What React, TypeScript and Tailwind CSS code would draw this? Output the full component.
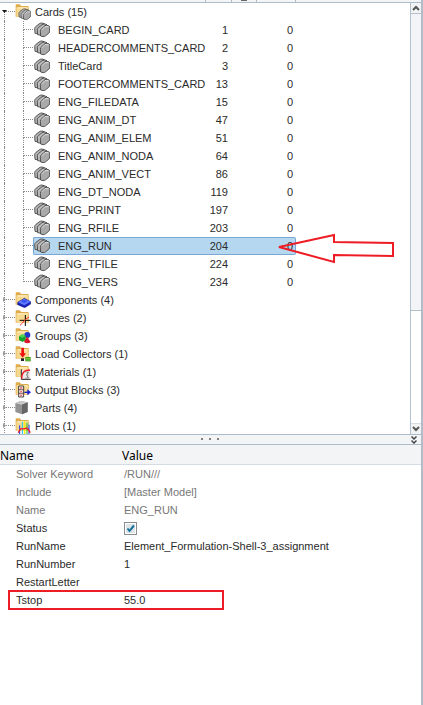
import type { ReactNode } from 'react';

const cards = [
  { name: 'BEGIN_CARD', id: 1 },
  { name: 'HEADERCOMMENTS_CARD', id: 2 },
  { name: 'TitleCard', id: 3 },
  { name: 'FOOTERCOMMENTS_CARD', id: 13 },
  { name: 'ENG_FILEDATA', id: 15 },
  { name: 'ENG_ANIM_DT', id: 47 },
  { name: 'ENG_ANIM_ELEM', id: 51 },
  { name: 'ENG_ANIM_NODA', id: 64 },
  { name: 'ENG_ANIM_VECT', id: 86 },
  { name: 'ENG_DT_NODA', id: 119 },
  { name: 'ENG_PRINT', id: 197 },
  { name: 'ENG_RFILE', id: 203 },
  { name: 'ENG_RUN', id: 204 },
  { name: 'ENG_TFILE', id: 224 },
  { name: 'ENG_VERS', id: 234 },
];

const selected = 'ENG_RUN';

const CardShape = () => (
  <>
    <path d="M3 34 L2 20 Q2 16 6 13 L15 6 Q18 3 24 3 L31 5 L16 18 L14 36 Z" fill="#b4b4b4" stroke="#3f3f3f" strokeWidth="2.5" />
    <path d="M11 38 L10 23 Q10 19 14 16 L23 9 Q26 6 32 6 L39 8 L24 21 L22 40 Z" fill="#bdbdbd" stroke="#3f3f3f" strokeWidth="2.5" />
    <path d="M20 42 L19 28 Q19 24 22 21 L30 13 Q33 10 37 10 L44 11 Q47 12 47 16 L47 30 L44 34 L34 42 Q31 44 27 44 Z" fill="#a9a9a9" stroke="#3f3f3f" strokeWidth="2.5" />
    <path d="M23 24 L33 14 L43 14" fill="none" stroke="#dedede" strokeWidth="3" />
  </>
);

const Folder = ({ children }: { children?: ReactNode }) => (
  <svg viewBox="0 0 48 48" className="size-4 shrink-0" aria-hidden="true">
    <path d="M2 38 V3 Q2 1 4 1 H14 L19 6 H38 Q41 6 41 9 V38 Z" fill="#dfab4c" />
    <path d="M4 12 Q4 9 8 9 H39 V38 H4 Z" fill="#f7d98f" />
    <path d="M8 12 H36" stroke="#fdf0c8" strokeWidth="3" />
    {children}
  </svg>
);

const CardIcon = () => (
  <svg viewBox="0 0 48 48" className="size-4 shrink-0" aria-hidden="true">
    <CardShape />
  </svg>
);

const CardsIcon = () => (
  <Folder>
    <g transform="translate(10 12) scale(0.8)">
      <CardShape />
    </g>
  </Folder>
);

const ComponentsIcon = () => (
  <Folder>
    <path d="M8 31 L28 19 L47 29 V36 L29 47 L8 38 Z" fill="#1722b8" stroke="#0c1280" strokeWidth="1.5" />
    <path d="M9 31 L28 20 L46 29 L28 40 Z" fill="#5f7bff" />
    <ellipse cx="28" cy="28" rx="8" ry="4" fill="#3a50ee" />
  </Folder>
);

const CurvesIcon = () => (
  <Folder>
    <path d="M14 31 H47 M31 15 V48" stroke="#000" strokeWidth="3" />
    <path d="M15 46 Q22 40 27 33 T42 21" fill="none" stroke="#f0282d" strokeWidth="3" />
  </Folder>
);

const GroupsIcon = () => (
  <Folder>
    <circle cx="37" cy="21" r="9" fill="#2336c8" />
    <path d="M12 25 L23 19 L32 24 V37 L22 42 L12 36 Z" fill="#16a32c" />
    <path d="M12 25 L23 19 L32 24 L22 29 Z" fill="#4bd75c" />
    <path d="M36 26 L47 42 Q37 50 27 42 Z" fill="#d8172c" />
  </Folder>
);

const LoadCollectorsIcon = () => (
  <Folder>
    <path d="M19 5 H27 V22 H33 L23 35 L13 22 H19 Z" fill="#ee1111" />
    <path d="M18 37 H27 V45 H18 Z" fill="#222" />
    <path d="M31 33 H47 V46 H31 Z" fill="#3b9412" />
    <path d="M33 37 H45 M33 42 H45" stroke="#a5f05f" strokeWidth="2" />
  </Folder>
);

const MaterialsIcon = () => (
  <Folder>
    <path d="M19 18 H46 V46 H19 Z" fill="#eee8e8" />
    <path d="M19 16 V46 H47" fill="none" stroke="#222" strokeWidth="3" />
    <path d="M20 44 C21 24 27 19 45 18" fill="none" stroke="#ef1c23" strokeWidth="4" />
    <path d="M31 24 H41 L34 33 L41 42 H31 M38 24 V42" fill="none" stroke="#777" strokeWidth="2" />
  </Folder>
);

const OutputBlocksIcon = () => (
  <Folder>
    <path d="M11 12 H26 V45 H11 Z" fill="#fff" stroke="#222" strokeWidth="2.5" />
    <path d="M11 23 H26 M11 34 H26" stroke="#222" strokeWidth="2" />
    <path d="M14 15 L23 21 M23 15 L14 21 M14 26 L23 32 M23 26 L14 32 M14 37 L23 43 M23 37 L14 43" stroke="#e0393e" strokeWidth="2" />
    <path d="M28 31 H40" stroke="#1a22d0" strokeWidth="4" />
    <path d="M37 22 L48 31 L37 40 Z" fill="#1a22d0" />
  </Folder>
);

const PartsIcon = () => (
  <svg viewBox="0 0 48 48" className="size-4 shrink-0" aria-hidden="true">
    <path d="M1 10 L16 3 L38 7 V36 L21 43 L1 36 Z" fill="#929292" />
    <path d="M1 10 L16 3 L38 7 L21 14 Z" fill="#c9c9c9" />
    <path d="M21 14 L38 7 V36 L21 43 Z" fill="#666" />
  </svg>
);

const PlotsIcon = () => (
  <Folder>
    <path d="M14 22 V48" stroke="#1d32e8" strokeWidth="3" />
    <path d="M22 12 V48" stroke="#19c2e8" strokeWidth="3" />
    <path d="M29 10 V48" stroke="#f4ee1c" strokeWidth="5" />
    <path d="M36 14 V48" stroke="#22b52e" strokeWidth="3" />
    <path d="M42 20 V48" stroke="#1d32e8" strokeWidth="3" />
    <path d="M10 44 Q16 30 22 32 T34 30 Q40 32 46 44" fill="none" stroke="#ef1c23" strokeWidth="4" />
  </Folder>
);

const folders = [
  { name: 'Components (4)', icon: <ComponentsIcon /> },
  { name: 'Curves (2)', icon: <CurvesIcon /> },
  { name: 'Groups (3)', icon: <GroupsIcon /> },
  { name: 'Load Collectors (1)', icon: <LoadCollectorsIcon /> },
  { name: 'Materials (1)', icon: <MaterialsIcon /> },
  { name: 'Output Blocks (3)', icon: <OutputBlocksIcon /> },
  { name: 'Parts (4)', icon: <PartsIcon /> },
  { name: 'Plots (1)', icon: <PlotsIcon /> },
];

const FolderRow = ({ name, icon, open }: { name: string; icon: ReactNode; open?: boolean }) => (
  <tr className="h-[18px]">
    <td colSpan={5} className="p-0">
      <div className="relative flex h-[18px] items-center pl-1">
        <div className="w-[11px] shrink-0">
          <div className={`h-[9px] border-b border-dotted border-[#8a8a8a] ${open ? '' : 'border-l'}`} />
          <div className="h-[9px] border-l border-dotted border-[#8a8a8a]" />
        </div>
        <button
          type="button"
          aria-label={`Toggle ${name}`}
          aria-expanded={!!open}
          className="absolute left-[2px] top-[6px] h-[5px] w-[6px]"
        >
          <svg viewBox="0 0 6 5" className="block h-[5px] w-[6px]">
            {open ? <path d="M0 1 H5 L2.5 4 Z" fill="#111" /> : <path d="M1 0 L4 2.5 L1 5 Z" fill="#999" />}
          </svg>
        </button>
        {icon}
        <span className="pl-1">{name}</span>
      </div>
    </td>
  </tr>
);

const CardRow = ({ name, id, last }: { name: string; id: number; last: boolean }) => {
  const active = name === selected;
  const cell = active ? 'border-y border-[#7ba7d4] bg-[#b5d8f0] leading-4' : '';
  return (
    <tr className="h-[18px]" aria-selected={active}>
      <td className="p-0">
        <div className="flex h-[18px] pl-1">
          <div className="w-[19px] shrink-0 border-l border-dotted border-[#8a8a8a]" />
          <div className="w-[10px] shrink-0">
            <div className="h-[9px] border-b border-l border-dotted border-[#8a8a8a]" />
            <div className={`h-[9px] border-dotted border-[#8a8a8a] ${last ? '' : 'border-l'}`} />
          </div>
          <div className={`flex min-w-0 flex-1 items-center gap-2 ${active ? 'rounded-l-xs border-l' : 'pl-px'} ${cell}`}>
            <CardIcon />
            <span>{name}</span>
          </div>
        </div>
      </td>
      <td className={`p-0 pr-[3px] text-right ${cell}`}>{id}</td>
      <td className={`p-0 ${cell}`} />
      <td className={`p-0 text-right ${active ? 'rounded-r-xs border-r pr-[2px]' : 'pr-[3px]'} ${cell}`}>0</td>
      <td className="p-0" />
    </tr>
  );
};

const ScrollBar = () => (
  <div className="flex w-[11px] shrink-0 flex-col border-l border-[#b4c1cc] bg-white">
    <button type="button" aria-label="Scroll up" className="flex h-[11px] items-center justify-center border-b border-[#b4c1cc] bg-[#f1f3f5]">
      <svg viewBox="0 0 8 6" className="h-[6px] w-2">
        <path d="M1 5 L4 2 L7 5" fill="none" stroke="#555" strokeWidth="2" />
      </svg>
    </button>
    <div className="h-[69%] border-b border-[#b4c1cc] bg-[#f3f4f7]" />
    <div className="flex-1" />
    <button type="button" aria-label="Scroll down" className="flex h-[11px] items-center justify-center border-t border-[#d5dbe3] bg-[#f1f3f5]">
      <svg viewBox="0 0 8 6" className="h-[6px] w-2">
        <path d="M1 1 L4 4 L7 1" fill="none" stroke="#555" strokeWidth="2" />
      </svg>
    </button>
  </div>
);

const Arrow = () => (
  <svg viewBox="0 0 118 32" className="pointer-events-none absolute left-[277px] top-[230px] h-8 w-[118px]" aria-hidden="true">
    <path d="M2 14 L57 2 V9 L116 10 V23 L57 22 V29 Z" fill="none" stroke="#ee1c24" strokeWidth="2" />
  </svg>
);

const Tree = () => (
  <section className="relative flex min-h-0 flex-[431_1_0%]">
    <div className="min-w-0 flex-1 overflow-hidden">
      <table className="w-full table-fixed border-separate border-spacing-0">
        <colgroup>
          <col className="w-[205px]" />
          <col className="w-[26px]" />
          <col className="w-[25px]" />
          <col className="w-[40px]" />
          <col />
        </colgroup>
        <tbody>
          <FolderRow name="Cards (15)" icon={<CardsIcon />} open />
          {cards.map((card, i) => (
            <CardRow key={card.name} {...card} last={i === cards.length - 1} />
          ))}
          {folders.map((folder) => (
            <FolderRow key={folder.name} {...folder} />
          ))}
        </tbody>
      </table>
    </div>
    <ScrollBar />
    <Arrow />
  </section>
);

const Splitter = () => (
  <div className="flex h-[11px] shrink-0 items-center border-y border-[#adbcc8] bg-[#f2f4f6] pr-1">
    <div className="flex flex-1 justify-center gap-[6px] pb-[2px] pl-2">
      <span className="size-[2px] bg-[#808080]" />
      <span className="size-[2px] bg-[#808080]" />
      <span className="size-[2px] bg-[#808080]" />
    </div>
    <button type="button" aria-label="Collapse panel">
      <svg viewBox="0 0 6 8" className="block h-2 w-[6px]">
        <path d="M0.5 0.5 L3 3 L5.5 0.5 M0.5 4.5 L3 7 L5.5 4.5" fill="none" stroke="#444" strokeWidth="1.5" />
      </svg>
    </button>
  </div>
);

const properties = [
  { name: 'Solver Keyword', value: '/RUN///', readOnly: true },
  { name: 'Include', value: '[Master Model]', readOnly: true },
  { name: 'Name', value: 'ENG_RUN', readOnly: true },
  { name: 'Status', value: true },
  { name: 'RunName', value: 'Element_Formulation-Shell-3_assignment' },
  { name: 'RunNumber', value: '1' },
  { name: 'RestartLetter', value: '' },
  { name: 'Tstop', value: '55.0' },
];

const Properties = () => (
  <section className="relative min-h-0 flex-[260_1_0%] overflow-hidden">
    <table className="w-full table-fixed border-separate border-spacing-0 text-left">
      <colgroup>
        <col className="w-[122px]" />
        <col />
      </colgroup>
      <thead>
        <tr className="h-5 bg-[#f2f4f6] font-['Noto_Sans',sans-serif] text-[12px] text-black">
          <th className="border-b border-[#d3dbe4] p-0 pt-[3px] font-normal leading-4">Name</th>
          <th className="border-b border-[#d3dbe4] p-0 pt-[3px] font-normal leading-4">Value</th>
        </tr>
      </thead>
      <tbody>
        {properties.map(({ name, value, readOnly }) => (
          <tr key={name} className={`h-[18px] ${readOnly ? 'text-[#777]' : ''}`}>
            <td className="p-0 pl-4">
              {value === true ? <label htmlFor="status">{name}</label> : name}
            </td>
            <td className="p-0 pl-[2px]">
              {value === true ? (
                <span className="relative block size-[13px]">
                  <input
                    id="status"
                    type="checkbox"
                    defaultChecked
                    className="peer block size-[13px] appearance-none border border-[#8a8d91] bg-[#dfe4e8] shadow-[inset_0_0_0_1px_#fff]"
                  />
                  <svg viewBox="0 0 13 13" className="pointer-events-none absolute inset-0 hidden size-[13px] peer-checked:block">
                    <path d="M3.5 6.5 L5.5 9 L10 3.5" fill="none" stroke="#17709c" strokeWidth="2" />
                  </svg>
                </span>
              ) : (
                value
              )}
            </td>
          </tr>
        ))}
      </tbody>
    </table>
    <div className="pointer-events-none absolute left-2 top-[145px] h-5 w-[216px] border-2 border-[#ee1c24]" />
  </section>
);

const App = () => (
  <div className="flex h-screen flex-col border-r-2 border-[#b0bdc9] bg-white font-['Liberation_Sans',Arial,sans-serif] text-[11px] leading-[18px] text-[#2b2b2b]">
    <div className="flex h-[3px] shrink-0 border-b border-[#adbcc8] bg-[#f2f4f6]">
      <div className="w-[206px] border-r border-[#adbcc8]" />
      <div className="w-[26px] border-r border-[#adbcc8]" />
      <div className="flex w-[25px] justify-center border-r border-[#adbcc8]">
        <span className="h-px w-[6px] bg-[#666]" />
      </div>
      <div className="w-[39px] border-r border-[#adbcc8]" />
    </div>
    <Tree />
    <Splitter />
    <Properties />
  </div>
);

export default App;
